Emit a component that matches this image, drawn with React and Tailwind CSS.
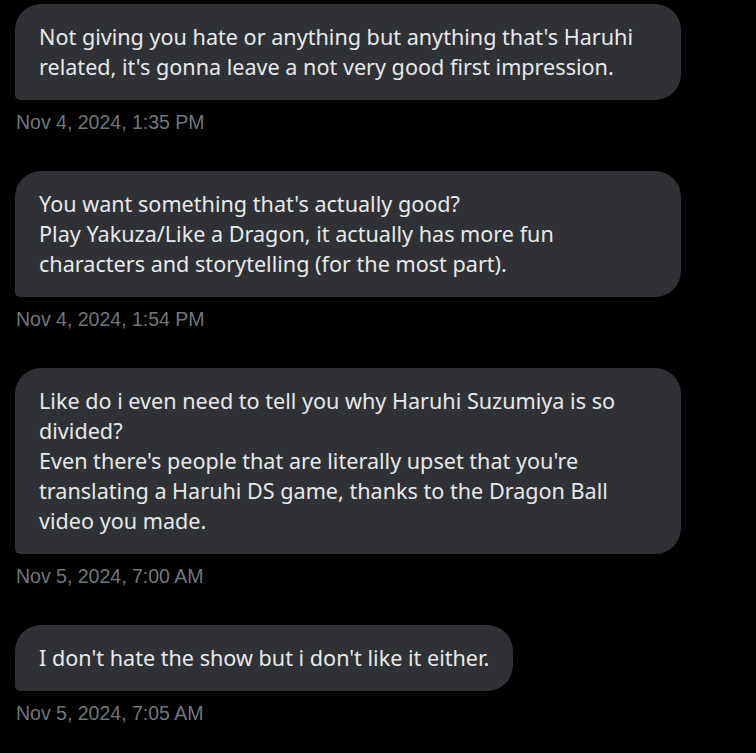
import React from "react";

const messages = [
  {
    lines: [
      "Not giving you hate or anything but anything that's Haruhi",
      "related, it's gonna leave a not very good first impression.",
    ],
    time: "Nov 4, 2024, 1:35 PM",
    full: true,
  },
  {
    lines: [
      "You want something that's actually good?",
      "Play Yakuza/Like a Dragon, it actually has more fun",
      "characters and storytelling (for the most part).",
    ],
    time: "Nov 4, 2024, 1:54 PM",
    full: true,
  },
  {
    lines: [
      "Like do i even need to tell you why Haruhi Suzumiya is so",
      "divided?",
      "Even there's people that are literally upset that you're",
      "translating a Haruhi DS game, thanks to the Dragon Ball",
      "video you made.",
    ],
    time: "Nov 5, 2024, 7:00 AM",
    full: true,
  },
  {
    lines: ["I don't hate the show but i don't like it either."],
    time: "Nov 5, 2024, 7:05 AM",
    full: false,
  },
];

const Message = ({ lines, time, full }) => (
  <div className="flex flex-col items-start">
    <div
      className={`${
        full ? "w-[666px]" : "w-fit"
      } rounded-[26px] rounded-bl-[5px] bg-[#2f3135] px-[24px] py-[18px] text-[21.6px] leading-[30px] text-[#e7e9ea] font-['Noto_Sans',sans-serif]`}
    >
      {lines.map((line, i) => (
        <div key={i} className="whitespace-nowrap">
          {line}
        </div>
      ))}
    </div>
    <div className="mt-[8px] pl-[1px] text-[19.5px] leading-[28px] text-[#71767b] font-['Liberation_Sans',Arial,sans-serif]">
      {time}
    </div>
  </div>
);

export default function App() {
  return (
    <div className="min-h-screen w-full bg-black pl-[15px] pt-[4px]">
      <div className="flex flex-col gap-[35px]">
        {messages.map((m, i) => (
          <Message key={i} {...m} />
        ))}
      </div>
    </div>
  );
}
